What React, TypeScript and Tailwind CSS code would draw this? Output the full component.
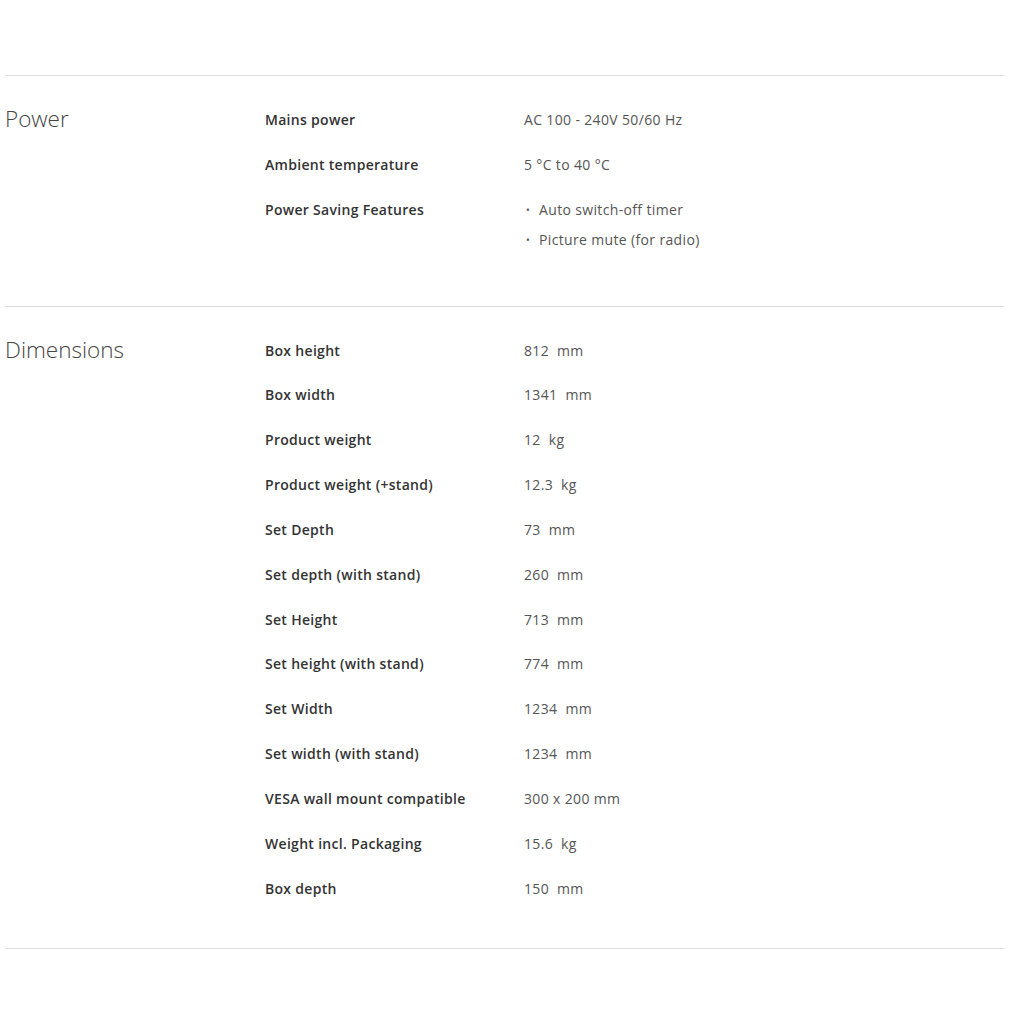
import React from "react";

type Row = { label: string; value: string | string[] };

const power: Row[] = [
  { label: "Mains power", value: "AC 100 - 240V 50/60 Hz" },
  { label: "Ambient temperature", value: "5 °C to 40 °C" },
  { label: "Power Saving Features", value: ["Auto switch-off timer", "Picture mute (for radio)"] },
];

const dims: Row[] = [
  { label: "Box height", value: "812\u00a0 mm" },
  { label: "Box width", value: "1341\u00a0 mm" },
  { label: "Product weight", value: "12\u00a0 kg" },
  { label: "Product weight (+stand)", value: "12.3\u00a0 kg" },
  { label: "Set Depth", value: "73\u00a0 mm" },
  { label: "Set depth (with stand)", value: "260\u00a0 mm" },
  { label: "Set Height", value: "713\u00a0 mm" },
  { label: "Set height (with stand)", value: "774\u00a0 mm" },
  { label: "Set Width", value: "1234\u00a0 mm" },
  { label: "Set width (with stand)", value: "1234\u00a0 mm" },
  { label: "VESA wall mount compatible", value: "300 x 200 mm" },
  { label: "Weight incl. Packaging", value: "15.6\u00a0 kg" },
  { label: "Box depth", value: "150\u00a0 mm" },
];

function Section({ title, rows, pb }: { title: string; rows: Row[]; pb: string }) {
  return (
    <div className={`flex border-t border-[#dcdcdc] pt-[29px] ${pb}`}>
      <div className="w-[260px] shrink-0 pt-[2px] text-[22.5px] leading-[24px] font-light text-[#444]">
        {title}
      </div>
      <div className="flex flex-col gap-[14.83px]">
        {rows.map((r) => (
          <div key={r.label} className="flex">
            <div className="w-[259px] shrink-0 text-[14px] leading-[30px] font-semibold tracking-[0.3px] text-[#333]">{r.label}</div>
            <div className="text-[14px] leading-[30px] tracking-[0.35px] text-[#555]">
              {Array.isArray(r.value) ? (
                <ul>
                  {r.value.map((v) => (
                    <li key={v} className="flex">
                      <span className="w-[15px] pl-[2px] text-[10px]">•</span>
                      <span>{v}</span>
                    </li>
                  ))}
                </ul>
              ) : (
                r.value
              )}
            </div>
          </div>
        ))}
      </div>
    </div>
  );
}

export default function App() {
  return (
    <div className="min-h-[1024px] bg-white pt-[75px] pl-[5px] pr-[20px]" style={{ fontFamily: "'Open Sans', 'Liberation Sans', sans-serif" }}>
      <Section title="Power" rows={power} pb="pb-[51px]" />
      <Section title="Dimensions" rows={dims} pb="pb-[44px]" />
      <div className="border-t border-[#dcdcdc]" />
    </div>
  );
}
